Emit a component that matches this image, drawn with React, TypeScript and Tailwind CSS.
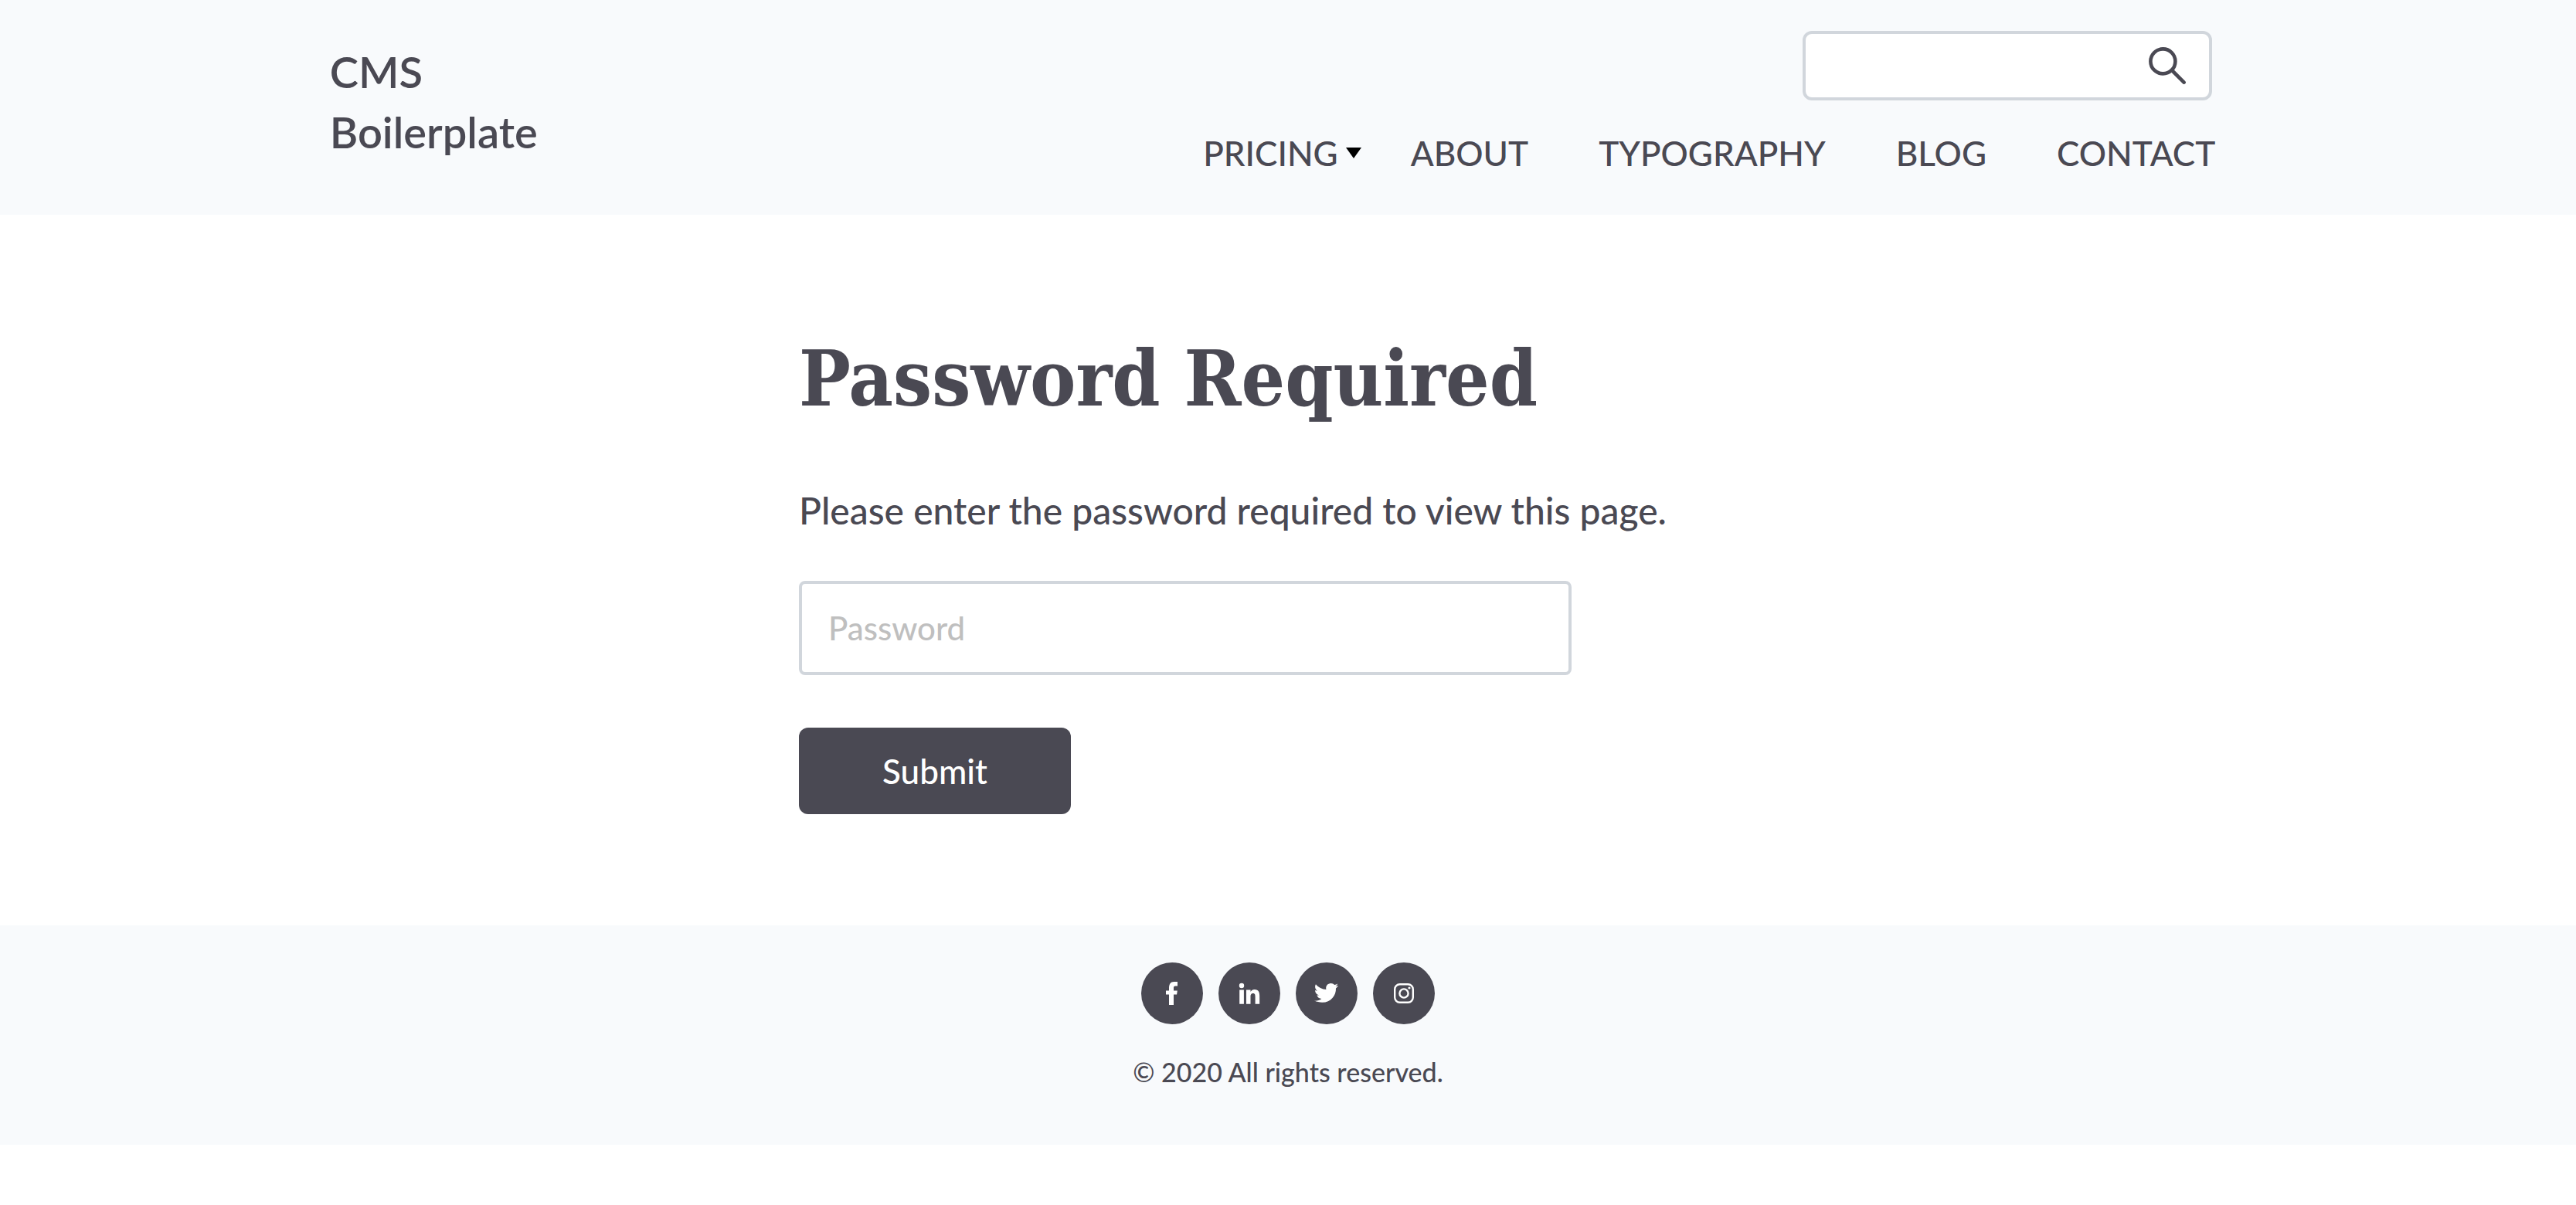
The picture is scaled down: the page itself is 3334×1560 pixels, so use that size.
import React from "react";

const navItems = ["ABOUT", "TYPOGRAPHY", "BLOG", "CONTACT"];

function SearchIcon() {
  return (
    <svg viewBox="0 0 48 48" className="size-12" fill="none" stroke="currentColor" strokeWidth="4.6" aria-hidden="true">
      <circle cx="18.4" cy="18.4" r="16" />
      <path d="M30 30 L45.6 45.6" strokeLinecap="round" />
    </svg>
  );
}

function FacebookIcon() {
  return (
    <svg viewBox="0 0 32 32" className="size-8" fill="currentColor" aria-hidden="true">
      <path d="M12 31V17.500H8V12.500h4V9.600C12 4.400 13.800 1 18.600 1H23v5.400h-2.800C18.300 6.400 18 7.300 18 8.900V12.500h4.800l-.7 5H18V31Z" />
    </svg>
  );
}

function LinkedinIcon() {
  return (
    <svg viewBox="0 0 32 32" className="size-8" fill="currentColor" aria-hidden="true">
      <circle cx="6" cy="6" r="3.200" />
      <path d="M3.200 11.500H8.900V29.800H3.200ZM12 11.500h5.500v2.500c.8-1.500 2.500-3 5.200-3 5.500 0 6.500 3.600 6.500 8.600V29.800H23.600v-9c0-2.100 0-4.800-2.800-4.800s-3.300 2.200-3.300 4.600v9.200H12Z" />
    </svg>
  );
}

function TwitterIcon() {
  return (
    <svg viewBox="0 0 32 32" className="size-8" fill="currentColor" aria-hidden="true">
      <path d="M.2 25.600c3.400.3 6.600-.6 9.200-2.600-2.900-.1-5.200-1.900-6-4.500 1 .2 1.900.1 2.800-.1-3-.7-5.100-3.300-5.100-6.400.9.500 1.900.8 2.900.8-2.800-2-3.700-5.700-2-8.600 3.300 4 8.100 6.500 13.400 6.800-1-4.300 2-7.900 6.100-7.900 1.900 0 3.500.8 4.700 2 1.500-.3 2.800-.8 4-1.500-.5 1.500-1.500 2.700-2.700 3.500 1.300-.2 2.500-.5 3.700-1-.8 1.300-1.900 2.400-3.200 3.300.4 9-6.400 18.400-17.700 18.400-3.700 0-7.100-.9-10.100-2.200Z" />
    </svg>
  );
}

function InstagramIcon() {
  return (
    <svg viewBox="0 0 32 32" className="size-8" fill="none" stroke="currentColor" strokeWidth="2.400" aria-hidden="true">
      <rect x="4.200" y="4.200" width="23.600" height="23.600" rx="6.500" />
      <circle cx="16" cy="16" r="5.600" />
      <circle cx="23" cy="9" r="1.600" fill="currentColor" stroke="none" />
    </svg>
  );
}

const socials = [
  { label: "Facebook", Icon: FacebookIcon },
  { label: "LinkedIn", Icon: LinkedinIcon },
  { label: "Twitter", Icon: TwitterIcon },
  { label: "Instagram", Icon: InstagramIcon },
];

export default function App() {
  return (
    <div className="bg-white font-['Lato',sans-serif] font-medium text-[#4a4953]">
      <header className="flex items-start justify-between bg-[#f8fafc] pt-10 pr-[14%] pb-11 pl-[12.8%]">
        <a href="#" className="mt-3.5 w-72 text-[56px] leading-[78px] font-semibold">
          CMS Boilerplate
        </a>
        <div className="flex flex-col items-end gap-8">
          <form className="mr-1 flex h-[90px] w-[530px] items-center rounded-xl border-4 border-[#d1d6dc] bg-white pr-[30px]">
            <input type="search" aria-label="Search" className="h-full min-w-0 flex-1 bg-transparent px-6 text-[42px] outline-none" />
            <button type="button" aria-label="Search">
              <SearchIcon />
            </button>
          </form>
          <nav className="flex items-center text-[44px] leading-[72px]">
            <a href="#" className="mr-16 flex items-center gap-2.5">
              PRICING
              <svg viewBox="0 0 20 14" className="h-[14px] w-5" aria-hidden="true">
                <path d="M0 0H20L10 14Z" fill="#000" />
              </svg>
            </a>
            <div className="flex gap-[91px]">
              {navItems.map((item) => (
                <a key={item} href="#">
                  {item}
                </a>
              ))}
            </div>
          </nav>
        </div>
      </header>

      <main className="mx-auto max-w-[1266px] pt-[142px] pb-36">
        <h1 className="font-['DejaVu_Serif_Condensed','DejaVu_Serif',serif] text-[99px] leading-[140px] font-bold whitespace-nowrap">
          Password Required
        </h1>
        <p className="mt-[62px] text-[48px] leading-[78px]">Please enter the password required to view this page.</p>
        <form className="mt-[52px] flex flex-col items-start gap-[68px]">
          <input
            type="password"
            aria-label="Password"
            placeholder="Password"
            className="h-[122px] w-full max-w-[1000px] rounded-lg border-4 border-[#d1d6dc] bg-white px-[34px] text-[42px] outline-none placeholder:text-[#bfbfbf]"
          />
          <button type="button" className="h-28 w-[352px] rounded-xl bg-[#4a4953] text-[44px] text-white">
            Submit
          </button>
        </form>
      </main>

      <footer className="flex flex-col items-center bg-[#f8fafc] pt-12 pb-16">
        <div className="flex gap-5">
          {socials.map(({ label, Icon }) => (
            <a key={label} href="#" aria-label={label} className="flex size-20 items-center justify-center rounded-full bg-[#4a4953] text-white">
              <Icon />
            </a>
          ))}
        </div>
        <p className="mt-8 text-[34px] leading-[60px]">© 2020 All rights reserved.</p>
      </footer>
    </div>
  );
}
